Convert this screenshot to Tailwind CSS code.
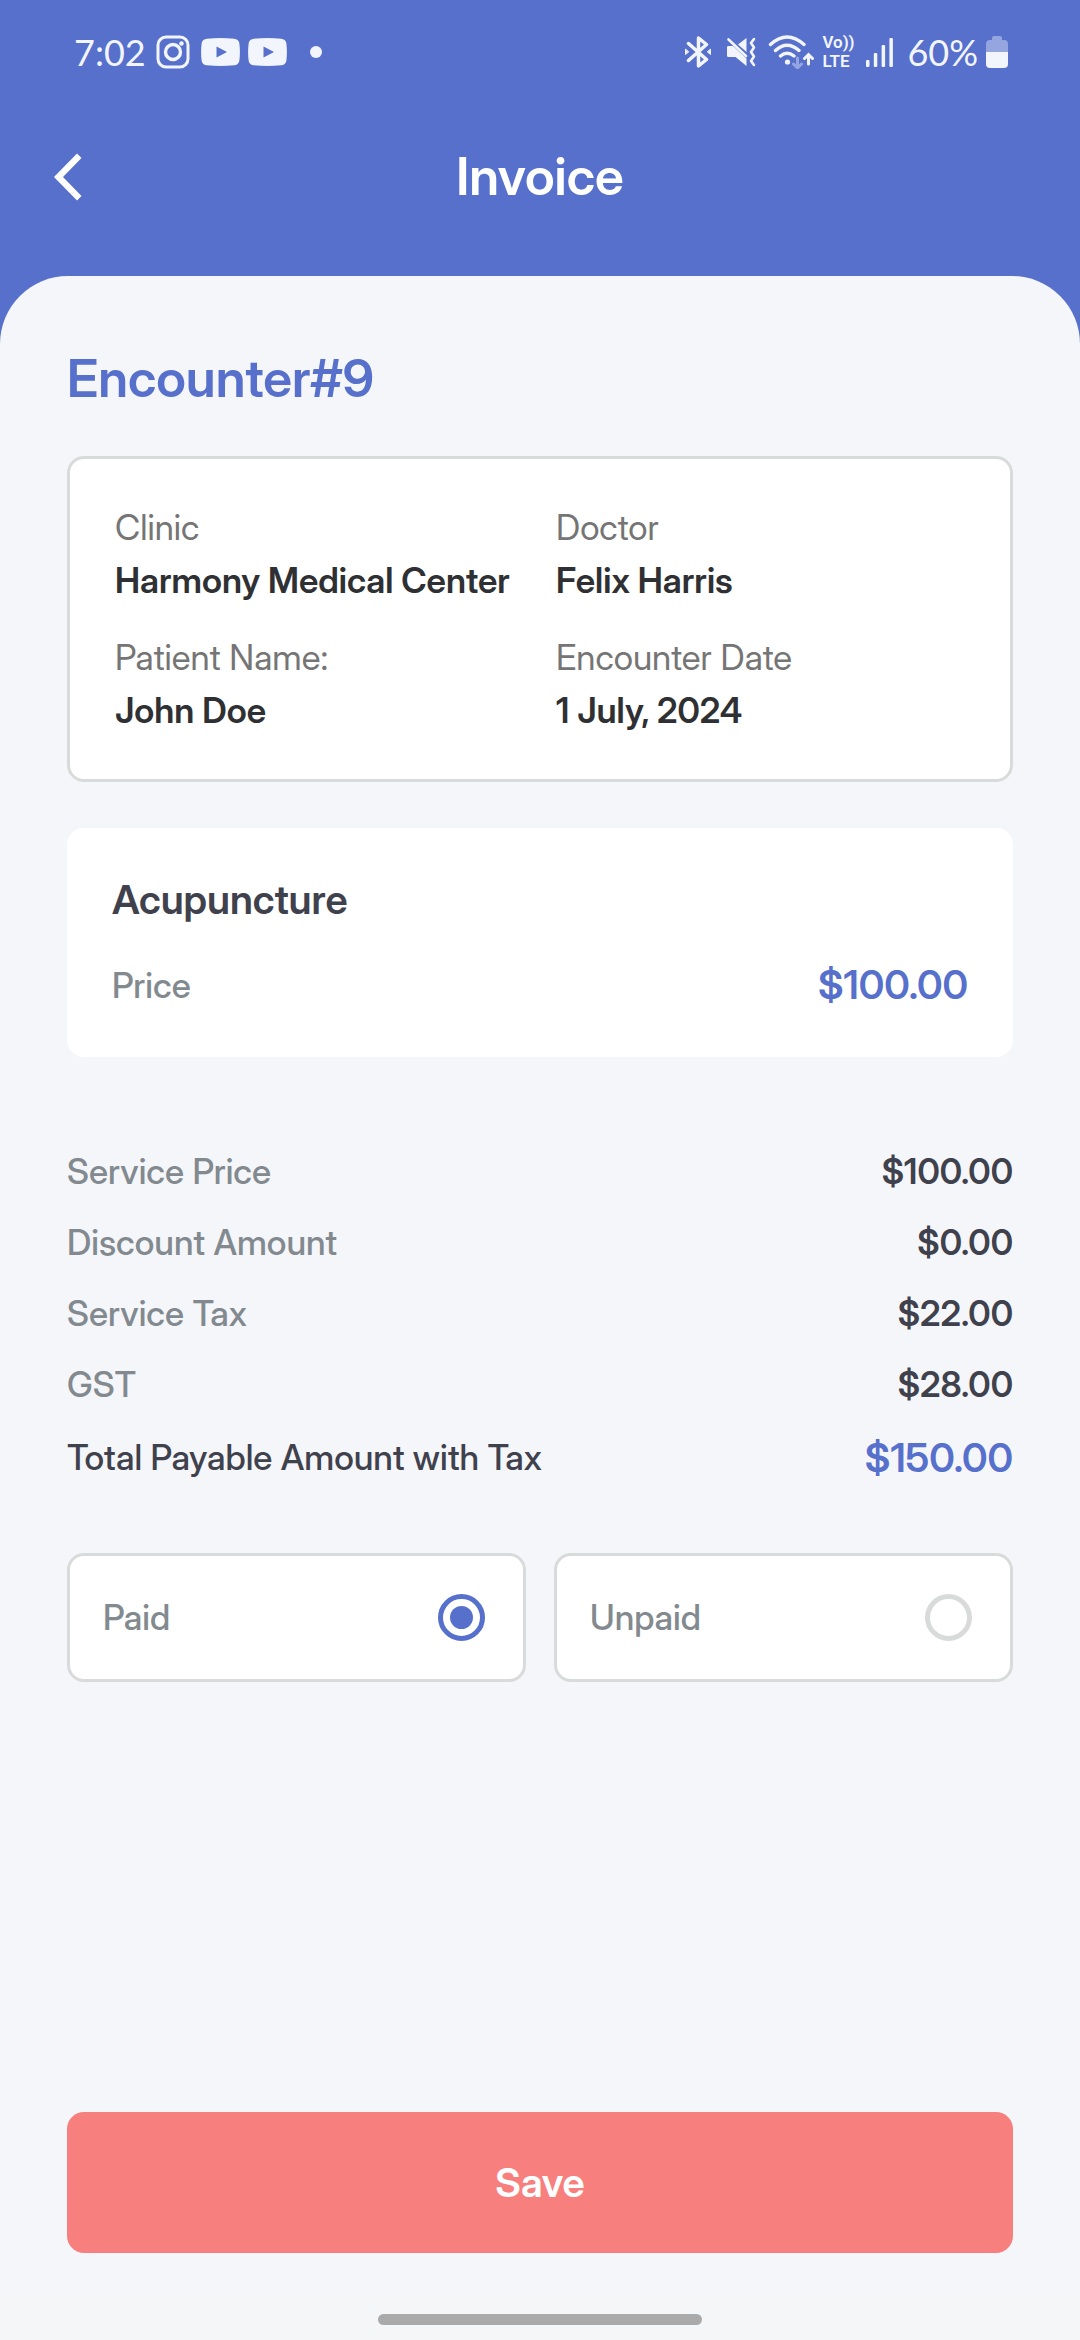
<!DOCTYPE html>
<html lang="en">

<head>
    <meta charset="UTF-8" />
    <meta name="viewport" content="width=device-width, initial-scale=1.0" />
    <title>Invoice</title>
    <script src="https://cdn.jsdelivr.net/npm/@tailwindcss/browser@4"></script>
</head>

<body class="bg-[#5670cc] font-['Inter_Display','Inter',sans-serif] text-[35px] leading-[41px]">
    <div class="min-h-screen flex flex-col">

        <!-- Status bar -->
        <div class="h-[104px] pl-[74px] pr-[72px] flex items-center justify-between text-[#f3f5fc] font-['Lato',sans-serif]">
            <div class="flex items-center">
                <span class="w-[82px] text-[36px]">7:02</span>
                <svg class="w-[34px] h-[34px] mr-[11px]" viewBox="0 0 34 34" fill="none" stroke="currentColor">
                    <rect x="2" y="2" width="30" height="30" rx="8" stroke-width="3" />
                    <circle cx="17" cy="17" r="7.5" stroke-width="3.4" />
                    <circle cx="25.5" cy="8.5" r="2.2" fill="currentColor" stroke="none" />
                </svg>
                <svg class="w-[39px] h-[28px] mr-2" viewBox="0 0 39 28" fill="currentColor">
                    <path fill-rule="evenodd" d="M6 .7Q19.5 -.5 33 .7Q37.5 1 38.3 5Q39.5 14 38.3 23Q37.5 27 33 27.3Q19.5 28.5 6 27.3Q1.5 27 .7 23Q-.5 14 .7 5Q1.5 1 6 .7ZM15.5 8.5V19.5L26 14Z" />
                </svg>
                <svg class="w-[39px] h-[28px] mr-[23px]" viewBox="0 0 39 28" fill="currentColor">
                    <path fill-rule="evenodd" d="M6 .7Q19.5 -.5 33 .7Q37.5 1 38.3 5Q39.5 14 38.3 23Q37.5 27 33 27.3Q19.5 28.5 6 27.3Q1.5 27 .7 23Q-.5 14 .7 5Q1.5 1 6 .7ZM15.5 8.5V19.5L26 14Z" />
                </svg>
                <span class="size-3 rounded-full bg-[#f3f5fc]"></span>
            </div>

            <div class="flex items-center">
                <!-- bluetooth -->
                <svg class="w-7 h-8 mr-[14px]" viewBox="0 0 28 32" fill="none" stroke="currentColor" stroke-width="3.5" stroke-linejoin="round" stroke-linecap="round">
                    <path d="M4.5 7.5L22.5 23.5L14.5 30V2L22.5 8.5L4.5 24.5" />
                    <path d="M1.5 13.5V18.5L4.5 16ZM26.5 13.5V18.5L23.5 16Z" fill="currentColor" stroke-width="1" />
                </svg>
                <!-- muted, vibrate -->
                <svg class="w-[30px] h-[30px] mr-3" viewBox="0 0 30 30" fill="currentColor">
                    <path d="M1 10Q1 9 2.5 9H7L20.5 21.5V29L9.5 20H2.5Q1 20 1 18.5Z" />
                    <path d="M20.5 1V15L12 7.5Z" />
                    <path d="M2.5 2.5L20 19" fill="none" stroke="currentColor" stroke-width="2.6" stroke-linecap="round" />
                    <path d="M28 2L25 6L28 10.5L25 15L28 19.5L25 24L28 28" fill="none" stroke="currentColor" stroke-width="2.6" stroke-linecap="round" stroke-linejoin="round" />
                </svg>
                <!-- wifi -->
                <svg class="w-[46px] h-[34px] mr-2" viewBox="0 0 46 34" fill="none" stroke="currentColor" stroke-width="3.4" stroke-linecap="round">
                    <path d="M2.5 9.5Q19 -5.5 36 9.5M7.5 15.5Q19 5 31 15.5M12.5 21Q19 15.5 26 21" />
                    <circle cx="19.5" cy="27" r="2.6" fill="currentColor" stroke="none" />
                    <path d="M29.5 23V32.5M25.5 29L29.5 33L33.5 29" opacity=".4" stroke-width="3" />
                    <path d="M40.5 29V20M36.5 23.5L40.5 19.5L44.5 23.5" stroke-width="3" />
                </svg>
                <div class="w-[34px] mr-[10px] font-['Roboto',sans-serif] font-semibold text-[17px] leading-[19px]">
                    <div class="whitespace-nowrap">Vo))</div>
                    <div>LTE</div>
                </div>
                <!-- signal -->
                <svg class="w-[27px] h-[29px] mr-[14px]" viewBox="0 0 27 29" fill="currentColor">
                    <rect x="0" y="22" width="3.5" height="7" rx="1" />
                    <rect x="7.8" y="15" width="3.5" height="14" rx="1" />
                    <rect x="15.6" y="7" width="3.5" height="22" rx="1" />
                    <rect x="23.4" y="0" width="3.5" height="29" rx="1" />
                </svg>
                <span class="mr-2 text-[36px]">60%</span>
                <!-- battery -->
                <svg class="w-[22px] h-8" viewBox="0 0 22 32" fill="currentColor">
                    <path d="M6 2Q6 0 8 0H14Q16 0 16 2V4H18Q22 4 22 8V16H0V8Q0 4 4 4H6Z" opacity=".4" />
                    <path d="M0 16H22V28Q22 32 18 32H4Q0 32 0 28Z" />
                </svg>
            </div>
        </div>

        <!-- App bar -->
        <header class="h-[172px] px-[54px] pb-[26px] grid grid-cols-[1fr_auto_1fr] items-center text-white">
            <button type="button" aria-label="Back" class="justify-self-start">
                <svg class="w-7 h-12" viewBox="0 0 28 48" fill="currentColor">
                    <path d="M23 .5L27.5 5L9 24L27.5 43L23 47.5L0 24Z" />
                </svg>
            </button>
            <h1 class="text-[52px] leading-[60px] font-semibold">Invoice</h1>
        </header>

        <form class="flex-1 flex flex-col bg-[#f5f6fa] rounded-t-[68px] px-[67px] pt-[73px] pb-[42px]">
            <h2 class="text-[52px] leading-[60px] font-semibold text-[#5670cc]">Encounter#9</h2>

            <dl class="mt-[47px] px-[45px] py-11 grid grid-cols-2 gap-x-8 gap-y-7 bg-white border-3 border-[#d9dbda] rounded-[17px] leading-[49px] text-[#2f3033]">
                <div class="flex flex-col gap-1">
                    <dt class="text-[#757575]">Clinic</dt>
                    <dd class="font-semibold">Harmony Medical Center</dd>
                </div>
                <div class="flex flex-col gap-1">
                    <dt class="text-[#757575]">Doctor</dt>
                    <dd class="font-semibold">Felix Harris</dd>
                </div>
                <div class="flex flex-col gap-1">
                    <dt class="text-[#757575]">Patient Name:</dt>
                    <dd class="font-semibold">John Doe</dd>
                </div>
                <div class="flex flex-col gap-1">
                    <dt class="text-[#757575]">Encounter Date</dt>
                    <dd class="font-semibold">1 July, 2024</dd>
                </div>
            </dl>

            <section class="mt-[46px] p-[45px] flex flex-col gap-[31px] bg-white rounded-[17px] leading-[54px]">
                <h3 class="text-[40px] leading-[54px] font-semibold text-[#3f414d]">Acupuncture</h3>
                <div class="flex justify-between items-center">
                    <span class="font-medium text-[#828a8f]">Price</span>
                    <span class="text-[40px] font-semibold text-[#5670cc]">$100.00</span>
                </div>
            </section>

            <dl class="mt-[94px] flex flex-col gap-[30px] text-[#3f414d]">
                <div class="flex justify-between">
                    <dt class="font-medium text-[#828a8f]">Service Price</dt>
                    <dd class="font-semibold">$100.00</dd>
                </div>
                <div class="flex justify-between">
                    <dt class="font-medium text-[#828a8f]">Discount Amount</dt>
                    <dd class="font-semibold">$0.00</dd>
                </div>
                <div class="flex justify-between">
                    <dt class="font-medium text-[#828a8f]">Service Tax</dt>
                    <dd class="font-semibold">$22.00</dd>
                </div>
                <div class="flex justify-between">
                    <dt class="font-medium text-[#828a8f]">GST</dt>
                    <dd class="font-semibold">$28.00</dd>
                </div>
                <div class="flex justify-between leading-[45px]">
                    <dt class="font-medium">Total Payable Amount with Tax</dt>
                    <dd class="text-[40px] font-semibold text-[#5670cc]">$150.00</dd>
                </div>
            </dl>

            <div class="mt-[73px] grid grid-cols-2 gap-7 font-medium text-[#828a8f]">
                <label for="paid" class="h-[129px] pl-[33px] pr-[38px] flex items-center justify-between bg-white border-3 border-[#d9dbda] rounded-[17px]">
                    Paid
                    <input type="radio" id="paid" name="status" value="paid" checked
                        class="appearance-none size-[47px] rounded-full border-[5px] border-[#d9dbda] grid place-items-center checked:border-[#5670cc] checked:before:block checked:before:size-[23px] checked:before:rounded-full checked:before:bg-[#5670cc]" />
                </label>
                <label for="unpaid" class="h-[129px] pl-[33px] pr-[38px] flex items-center justify-between bg-white border-3 border-[#d9dbda] rounded-[17px]">
                    Unpaid
                    <input type="radio" id="unpaid" name="status" value="unpaid"
                        class="appearance-none size-[47px] rounded-full border-[5px] border-[#d9dbda] grid place-items-center checked:border-[#5670cc] checked:before:block checked:before:size-[23px] checked:before:rounded-full checked:before:bg-[#5670cc]" />
                </label>
            </div>

            <button type="button" class="mt-auto h-[141px] rounded-[17px] bg-[#f77f7d] text-white text-[40px] font-semibold">Save</button>
        </form>

        <!-- Gesture bar -->
        <div class="h-[45px] pt-[19px] bg-[#f5f6f8]">
            <div class="mx-auto w-[30%] h-[11px] rounded-full bg-[#aaaaaa]"></div>
        </div>
    </div>
</body>

</html>
